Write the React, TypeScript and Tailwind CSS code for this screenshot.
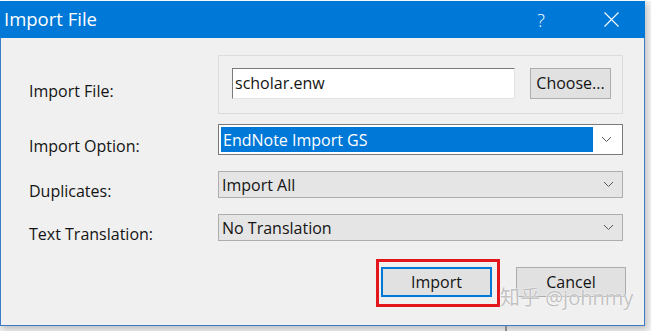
import React from "react";

function Chevron() {
  return (
    <svg width="11" height="7" viewBox="0 0 11 7" className="block">
      <path d="M1 1 L5.5 5.5 L10 1" fill="none" stroke="#5a5a5a" strokeWidth="1" />
    </svg>
  );
}

export default function App() {
  return (
    <div className="relative w-[651px] h-[331px] overflow-hidden bg-[#f2f2f2] font-['Open_Sans','Noto_Sans',sans-serif]">
      <div className="h-[1px] bg-white" />
      <div className="w-[645px] h-[325px] flex flex-col shadow-[2px_3px_6px_rgba(0,0,0,0.22)]">
        {/* Title bar */}
        <div className="h-[37px] shrink-0 bg-[#0078d7] flex items-center text-white">
          <span className="pl-[4px] text-[18.5px] leading-none">Import File</span>
          <span className="ml-auto w-[20px] text-center text-[18px] font-light leading-none">?</span>
          <div className="ml-[53px] mr-[26px] w-[15px] h-[15px]">
            <svg width="15" height="15" viewBox="0 0 15 15" className="block">
              <path d="M0.5 0.5 L14.5 14.5 M14.5 0.5 L0.5 14.5" stroke="#ffffff" strokeWidth="1.1" fill="none" />
            </svg>
          </div>
        </div>
        {/* Client */}
        <div className="flex-1 bg-[#f0f0f0] border-l border-r border-b border-[#3b7cc4] pl-[28px] pt-[17px] text-[16px] leading-[20px] text-[#141414]">
          {/* Row 1 */}
          <div className="flex h-[59px]">
            <div className="w-[189px] pt-[26px]">Import File:</div>
            <div className="w-[405px] h-[59px] border border-[#dcdcdc] flex items-start pl-[13px] pt-[12px] gap-[15px]">
              <div className="w-[283px] h-[31px] bg-white border border-t-[#7a7a7a] border-l-[#7a7a7a] border-r-[#e3e3e3] border-b-[#e3e3e3] pl-[2px] flex items-center pb-[2px]">
                scholar.enw
              </div>
              <div className="w-[81px] h-[31px] bg-[#e1e1e1] border border-[#adadad] flex items-center justify-center pb-[1px]">
                Choose...
              </div>
            </div>
          </div>
          {/* Row 2 */}
          <div className="flex h-[31px] mt-[10px]">
            <div className="w-[189px] pt-[12px]">Import Option:</div>
            <div className="w-[405px] h-[31px] bg-white border border-[#7a7a7a] p-[2px] flex items-center">
              <div className="w-[372px] h-[25px] bg-[#0078d7] text-white pl-[2px] flex items-center">EndNote Import GS</div>
              <div className="flex-1 flex justify-center">
                <Chevron />
              </div>
            </div>
          </div>
          {/* Row 3 */}
          <div className="flex h-[27px] mt-[16px]">
            <div className="w-[189px] pt-[10px]">Duplicates:</div>
            <div className="w-[405px] h-[27px] bg-[#e5e5e5] border border-[#adadad] flex items-center">
              <div className="flex-1 pl-[3px]">Import All</div>
              <div className="w-[28px] flex justify-center">
                <Chevron />
              </div>
            </div>
          </div>
          {/* Row 4 */}
          <div className="flex h-[27px] mt-[16px]">
            <div className="w-[189px] pt-[10px]">Text Translation:</div>
            <div className="w-[405px] h-[27px] bg-[#e5e5e5] border border-[#adadad] flex items-center">
              <div className="flex-1 pl-[3px]">No Translation</div>
              <div className="w-[28px] flex justify-center">
                <Chevron />
              </div>
            </div>
          </div>
          {/* Buttons */}
          <div className="flex items-start mt-[18px] ml-[347px]">
            <div className="border-[3px] border-[#e3161d] pl-[2px] pr-[5px] pt-[5px] pb-[7px]">
              <div className="w-[111px] h-[30px] bg-[#e1e1e1] border-2 border-[#0078d7] flex items-center justify-center">
                Import
              </div>
            </div>
            <div className="ml-[16px] mt-[8px] w-[110px] h-[30px] bg-[#e1e1e1] border border-[#adadad] flex items-center justify-center">
              Cancel
            </div>
          </div>
        </div>
      </div>
      {/* watermark */}
      <div className="absolute left-[500px] top-[285px] text-[20px] leading-[26px] text-[#c2c2c2] [text-shadow:0_0_2px_#ffffff,0_0_1px_#ffffff] font-['Open_Sans','Noto_Sans_CJK_SC',sans-serif] whitespace-nowrap">
        知乎 @johnmy
      </div>
      <div className="absolute left-[505px] top-[326px] w-[2px] h-[5px] bg-[#8a8a8a]" />
    </div>
  );
}
